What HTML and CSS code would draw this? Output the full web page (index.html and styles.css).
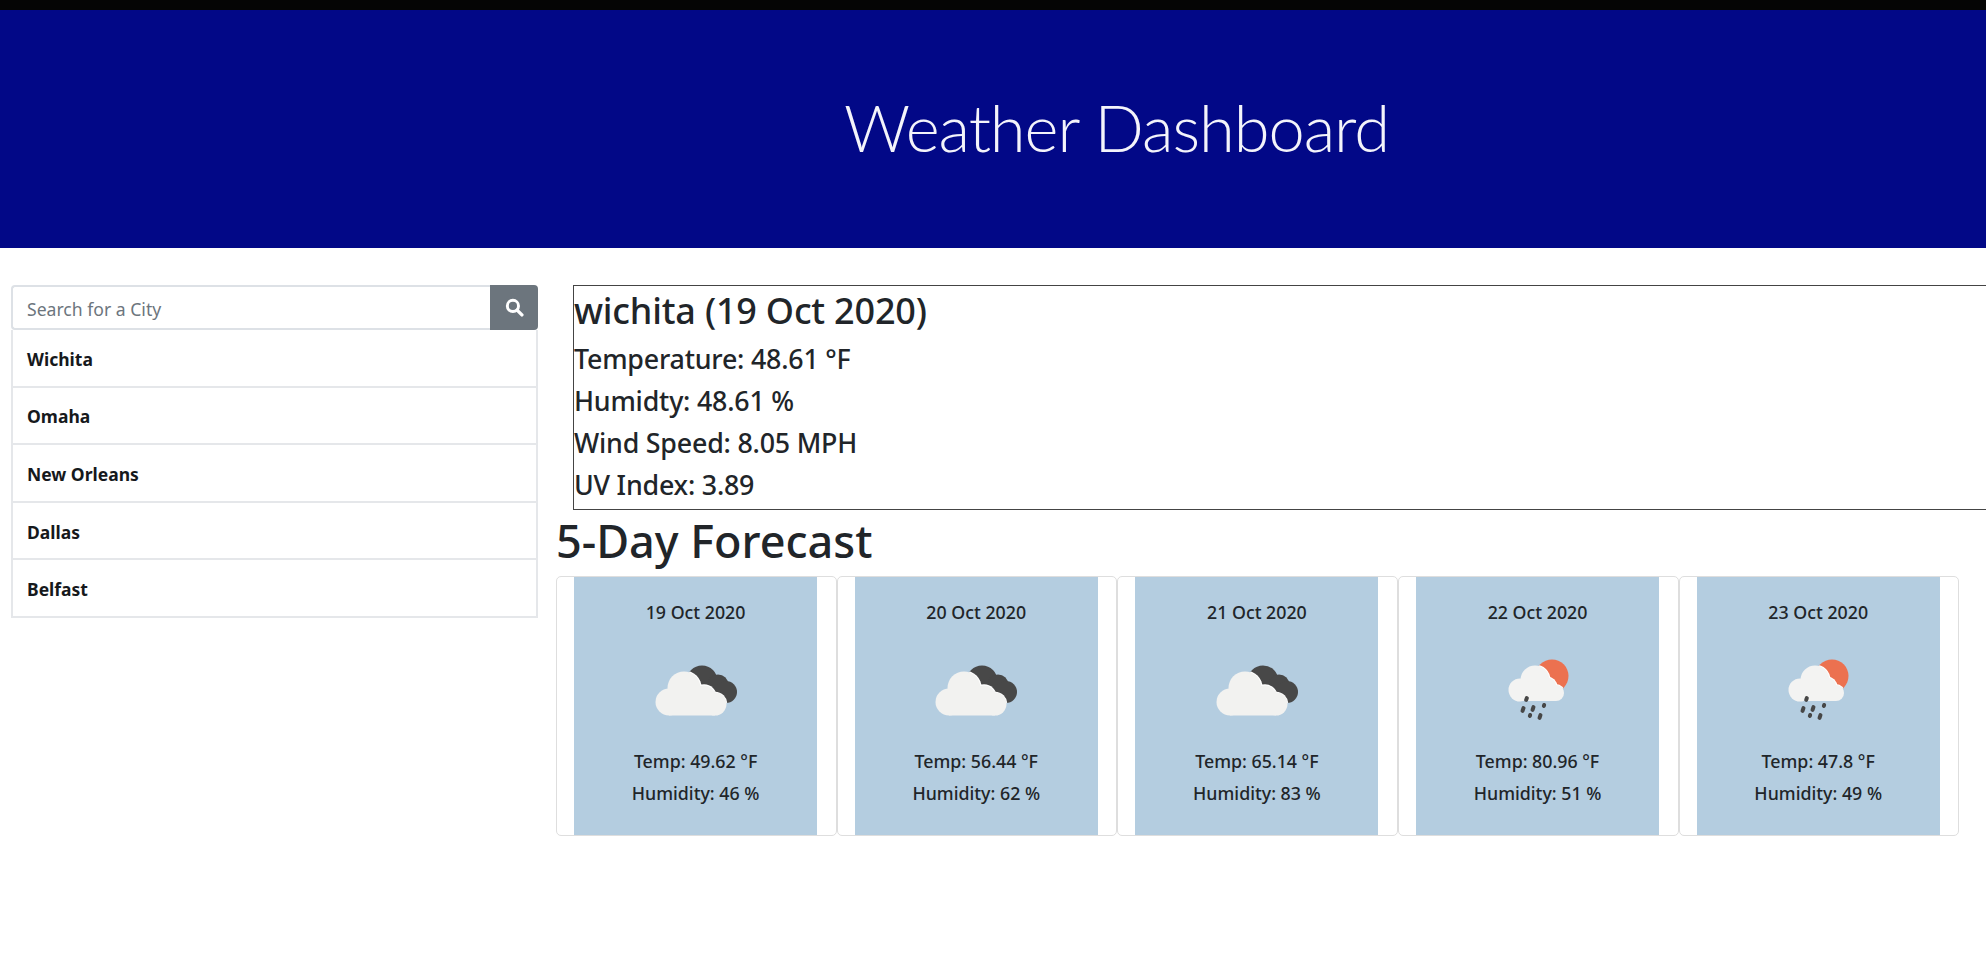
FILE: index.html
```html
<!DOCTYPE html>
<html lang="en">
<head>
<meta charset="utf-8">
<title>Weather Dashboard</title>
<link rel="stylesheet" href="styles.css">
</head>
<body>
<svg class="defs" width="0" height="0" aria-hidden="true">
  <defs>
    <clipPath id="dark-shape">
      <circle cx="61" cy="32" r="15.500"/>
      <circle cx="77" cy="36" r="10.500"/>
      <circle cx="85" cy="43" r="11"/>
      <path d="M61 36h24v18H67z"/>
    </clipPath>
    <clipPath id="sun-shape">
      <circle cx="62" cy="27" r="16.500"/>
    </clipPath>
  </defs>
  <symbol id="clouds" viewBox="0 0 110 80">
    <g fill="#484848">
      <circle cx="61" cy="32" r="15.500"/>
      <circle cx="77" cy="36" r="10.500"/>
      <circle cx="85" cy="43" r="11"/>
      <path d="M61 36h24v18H67z"/>
    </g>
    <g fill="#fff" clip-path="url(#dark-shape)">
      <circle cx="43" cy="39" r="17.700"/>
      <circle cx="63" cy="48" r="12.700"/>
      <circle cx="74" cy="55" r="12.200"/>
    </g>
    <g fill="#f2f2f0">
      <circle cx="43" cy="39" r="16.500"/>
      <circle cx="28" cy="53" r="13.500"/>
      <circle cx="63" cy="48" r="11.500"/>
      <circle cx="74" cy="55" r="11.500"/>
      <rect x="28" y="42" width="46" height="24.500"/>
    </g>
  </symbol>
  <symbol id="rain" viewBox="-7 0 110 80">
    <circle cx="62" cy="27" r="16.500" fill="#ec7150"/>
    <g fill="#fff" clip-path="url(#sun-shape)">
      <circle cx="45" cy="31" r="15.500"/>
      <circle cx="57" cy="38" r="10.500"/>
      <circle cx="66" cy="44" r="9"/>
    </g>
    <g fill="#f3f3f2">
      <circle cx="45" cy="31" r="14.500"/>
      <circle cx="30" cy="41" r="11.500"/>
      <circle cx="57" cy="38" r="9.500"/>
      <circle cx="66" cy="44" r="8"/>
      <rect x="30" y="36" width="36" height="16"/>
    </g>
    <g fill="#474747">
      <rect x="34.500" y="47" width="4" height="6" rx="2" transform="rotate(18 36.500 50)"/>
      <rect x="31" y="57" width="4" height="7" rx="2" transform="rotate(18 33 60.500)"/>
      <rect x="41" y="56" width="4" height="7" rx="2" transform="rotate(18 43 59.500)"/>
      <rect x="52" y="54" width="4" height="5" rx="2" transform="rotate(18 54 56.500)"/>
      <rect x="38" y="64" width="4" height="5" rx="2" transform="rotate(18 40 66.500)"/>
      <rect x="48" y="64" width="4" height="7" rx="2" transform="rotate(18 50 67.500)"/>
    </g>
  </symbol>
</svg>
<div class="topbar"></div>
<header class="hero">
  <h1 class="hero-title">Weather Dashboard</h1>
</header>
<div class="content">
  <aside class="sidebar">
    <form class="search">
      <input class="search-input" type="text" placeholder="Search for a City">
      <button class="search-btn" type="button" aria-label="Search">
        <svg width="19" height="19" viewBox="0 0 18 18"><circle cx="7.500" cy="7.500" r="5.300" fill="none" stroke="#fff" stroke-width="2.800"/><path d="M11.500 11.500l4.500 4.500" stroke="#fff" stroke-width="3.200" stroke-linecap="round"/></svg>
      </button>
    </form>
    <ul class="cities">
      <li class="city">Wichita</li>
      <li class="city">Omaha</li>
      <li class="city">New Orleans</li>
      <li class="city">Dallas</li>
      <li class="city">Belfast</li>
    </ul>
  </aside>
  <main class="main">
    <section class="current">
      <h2 class="current-title">wichita (19 Oct 2020)</h2>
      <p class="current-line">Temperature: 48.61 °F</p>
      <p class="current-line">Humidty: 48.61 %</p>
      <p class="current-line">Wind Speed: 8.05 MPH</p>
      <p class="current-line">UV Index: 3.89</p>
    </section>
    <h2 class="forecast-title">5-Day Forecast</h2>
    <div class="forecast">
      <article class="card"><div class="card-body">
        <p class="card-date">19 Oct 2020</p>
        <svg class="card-icon"><use href="#clouds"/></svg>
        <p class="card-line">Temp: 49.62 °F</p>
        <p class="card-line">Humidity: 46 %</p>
      </div></article>
      <article class="card"><div class="card-body">
        <p class="card-date">20 Oct 2020</p>
        <svg class="card-icon"><use href="#clouds"/></svg>
        <p class="card-line">Temp: 56.44 °F</p>
        <p class="card-line">Humidity: 62 %</p>
      </div></article>
      <article class="card"><div class="card-body">
        <p class="card-date">21 Oct 2020</p>
        <svg class="card-icon"><use href="#clouds"/></svg>
        <p class="card-line">Temp: 65.14 °F</p>
        <p class="card-line">Humidity: 83 %</p>
      </div></article>
      <article class="card"><div class="card-body">
        <p class="card-date">22 Oct 2020</p>
        <svg class="card-icon"><use href="#rain"/></svg>
        <p class="card-line">Temp: 80.96 °F</p>
        <p class="card-line">Humidity: 51 %</p>
      </div></article>
      <article class="card"><div class="card-body">
        <p class="card-date">23 Oct 2020</p>
        <svg class="card-icon"><use href="#rain"/></svg>
        <p class="card-line">Temp: 47.8 °F</p>
        <p class="card-line">Humidity: 49 %</p>
      </div></article>
    </div>
  </main>
</div>
</body>
</html>
```

FILE: styles.css
```css
* { box-sizing: border-box; }
html, body { height: 100%; }
body {
  margin: 0;
  overflow: hidden;
  background: #fff;
  color: #212529;
  font-family: "Noto Sans", "Open Sans", sans-serif;
}
p, h1, h2, ul { margin: 0; padding: 0; }
.defs { position: absolute; }
.topbar { height: 10px; background: #050505; }
.hero {
  height: 238px;
  background: #020887;
  display: flex;
  align-items: center;
  justify-content: center;
  padding: 0 0 0 247px;
}
.hero-title {
  color: #f4f4fb;
  font-family: Lato, "Open Sans", sans-serif;
  font-size: 65px;
  font-weight: 300;
  letter-spacing: -1.050px;
  line-height: 1;
  margin-top: -3px;
}
.content { display: flex; padding: 37px 0 0 11px; }
.sidebar { flex: 0 0 527px; }
.search { display: flex; height: 45px; }
.search-input {
  flex: 1;
  min-width: 0;
  height: 45px;
  padding: 2px 14px 0;
  border: 2px solid #dde1e6;
  border-right: 0;
  border-radius: 4px 0 0 4px;
  font: 17.600px "Noto Sans", sans-serif;
  outline: 0;
  background: #fff;
}
.search-input::placeholder { color: #6c757d; opacity: 1; }
.search-btn {
  flex: 0 0 48px;
  display: flex;
  align-items: center;
  justify-content: center;
  padding: 0;
  border: 0;
  border-radius: 0 4px 4px 0;
  background: #6c757d;
}
.cities { list-style: none; }
.city {
  height: 57.600px;
  display: flex;
  align-items: center;
  padding: 2px 14px 0;
  border: 2px solid #e5e7ea;
  border-top: 0;
  font-size: 17.500px;
  font-weight: 700;
  color: #16191c;
}
.main { flex: 0 0 auto; margin-left: 18px; width: 1430px; }
.current {
  width: 1500px;
  height: 225px;
  margin-left: 17px;
  padding: 4px 0 0 0;
  border: 1.500px solid #444;
}
.current-title {
  font-size: 36px;
  font-weight: 500;
  line-height: 42px;
  margin-bottom: 6px;
  letter-spacing: -.2px;
}
.current-line {
  font-size: 26.800px;
  font-weight: 500;
  line-height: 42px;
  letter-spacing: -.2px;
}
.forecast-title {
  font-size: 45px;
  font-weight: 500;
  line-height: 60px;
  margin-top: 1px;
  margin-bottom: 5px;
}
.forecast { display: flex; }
.card {
  flex: 0 0 280.670px;
  height: 260px;
  border: 1.500px solid #dedede;
  border-radius: 5px;
  padding: 0 18.500px 0 17px;
}
.card-body {
  height: 100%;
  background: #b4cde0;
  display: flex;
  flex-direction: column;
  align-items: center;
  padding-top: 20px;
  font-size: 17.800px;
  font-weight: 500;
}
.card-date { line-height: 30px; }
.card-icon { width: 110px; height: 80px; margin: 22px 0 16px; }
.card-line { line-height: 32px; }
```
